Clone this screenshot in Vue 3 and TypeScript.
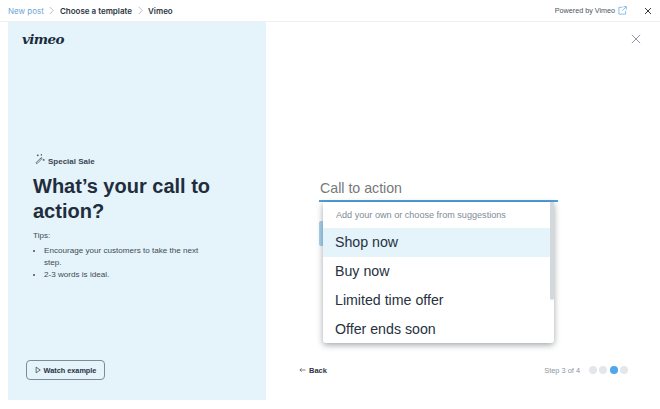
<template>
  <div class="page">
    <header class="topbar">
      <nav class="crumbs">
        <span class="crumb-link">New post</span>
        <svg class="chev" viewBox="0 0 8 10"><path d="M2 1l4 4-4 4" /></svg>
        <span>Choose a template</span>
        <svg class="chev" viewBox="0 0 8 10"><path d="M2 1l4 4-4 4" /></svg>
        <span>Vimeo</span>
      </nav>
      <div class="powered">
        <span>Powered by Vimeo</span>
        <svg class="ext" viewBox="0 0 10 10">
          <path d="M5 1.500H1v7.500h7.500V5.500M6 .7h3.300V4M9.200.8L4.700 5.300" />
        </svg>
        <svg class="top-close" viewBox="0 0 8 8"><path d="M1 1l6 6M7 1L1 7" /></svg>
      </div>
    </header>

    <main class="body">
      <aside class="panel">
        <div class="logo">vimeo</div>
        <div class="intro">
          <div class="tag">
            <svg class="wand" viewBox="0 0 12 12">
              <path d="M1 10.200l1 1 5.800-5.800-1-1zM6 5.200l1 1" />
              <path d="M3 1v2M2 2h2M9.500 6v2M8.500 7h2M7 .8v1.400M6.300 1.500h1.400" />
            </svg>
            <span>Special Sale</span>
          </div>
          <h1>What’s your call to action?</h1>
          <p class="tips-label">Tips:</p>
          <ul class="tips">
            <li v-for="tip in tips" :key="tip">{{ tip }}</li>
          </ul>
        </div>
        <button class="watch">
          <svg viewBox="0 0 8 10"><path d="M1.500 1.200v7.600L7 5z" /></svg>
          Watch example
        </button>
      </aside>

      <section class="content">
        <svg class="close" viewBox="0 0 12 12"><path d="M1 1l10 10M11 1L1 11" /></svg>
        <div class="form">
          <div class="field">
            <div class="field-input">Call to action</div>
            <div class="peek"></div>
            <div class="dropdown">
              <div class="hint">Add your own or choose from suggestions</div>
              <div
                v-for="(item, i) in suggestions"
                :key="item"
                class="option"
                :class="{ active: i === 0 }"
              >
                {{ item }}
              </div>
              <div class="scroll-thumb"></div>
            </div>
          </div>
        </div>
        <footer class="foot">
          <button class="back">
            <svg viewBox="0 0 8 6"><path d="M7.500 3H1M3 1L1 3l2 2" /></svg>
            Back
          </button>
          <div class="steps">
            <span class="step-label">Step 3 of 4</span>
            <span
              v-for="n in 4"
              :key="n"
              class="dot"
              :class="{ on: n === 3 }"
            ></span>
          </div>
        </footer>
      </section>
    </main>
  </div>
</template>

<script setup lang="ts">
const tips: string[] = [
  'Encourage your customers to take the next step.',
  '2-3 words is ideal.',
]

const suggestions: string[] = [
  'Shop now',
  'Buy now',
  'Limited time offer',
  'Offer ends soon',
]
</script>

<style>
html,
body {
  margin: 0;
  background: #fff;
}
</style>

<style scoped>
.page {
  width: 660px;
  height: 409px;
  overflow: hidden;
  display: flex;
  flex-direction: column;
  font-family: "Liberation Sans", Arial, sans-serif;
  color: #1f2d3d;
}

.topbar {
  height: 21px;
  flex: none;
  display: flex;
  align-items: center;
  justify-content: space-between;
  padding: 0 8px;
  border-bottom: 1px solid #eef0f2;
  font-family: Inter, "Liberation Sans", sans-serif;
  font-size: 8px;
}

.crumbs {
  display: flex;
  align-items: center;
  gap: 4.500px;
  font-weight: 600;
  color: #2b3642;
}

.crumb-link {
  color: #6ba6dc;
  font-weight: 400;
}

.chev {
  width: 7px;
  height: 9px;
  fill: none;
  stroke: #a9afb5;
  stroke-width: 0.9;
}

.powered {
  display: flex;
  align-items: center;
  font-family: "Liberation Sans", Arial, sans-serif;
  font-size: 7.2px;
  color: #4a5560;
}

.ext {
  width: 9px;
  height: 9px;
  margin-left: 3px;
  fill: none;
  stroke: #6fb0e6;
  stroke-width: 0.9;
}

.top-close {
  width: 8px;
  height: 8px;
  margin-left: 17px;
  fill: none;
  stroke: #333c45;
  stroke-width: 1;
}

.body {
  flex: 1;
  display: flex;
  padding: 0 0 9px 8px;
  min-height: 0;
}

.panel {
  width: 258px;
  flex: none;
  box-sizing: border-box;
  background: #e5f3fa;
  display: flex;
  flex-direction: column;
  padding: 8px 18px 20px 14px;
}

.logo {
  font-family: "DejaVu Serif", "Liberation Serif", serif;
  font-style: italic;
  font-weight: 700;
  font-size: 13.500px;
  line-height: 18px;
  color: #1a2b3c;
  letter-spacing: -0.6px;
}

.intro {
  margin-top: 105px;
  padding-left: 11px;
  flex: 1;
}

.tag {
  display: flex;
  align-items: flex-end;
  gap: 2px;
  margin-left: 2px;
  font-size: 8px;
  font-weight: 700;
  color: #3a4753;
  height: 13px;
}

.wand {
  width: 11px;
  height: 12px;
  margin-bottom: 1px;
  fill: none;
  stroke: #3a4753;
  stroke-width: 0.8;
}

h1 {
  margin: 8px 0 0;
  width: 190px;
  font-size: 20px;
  line-height: 25px;
  font-weight: 700;
  color: #1f2d3d;
}

.tips-label {
  margin: 6px 0 0;
  font-size: 8.1px;
  line-height: 12px;
  color: #3f4b57;
}

.tips {
  margin: 3px 0 0;
  padding: 0 0 0 11px;
  width: 170px;
  font-size: 8.1px;
  line-height: 12px;
  color: #3f4b57;
}

.watch {
  align-self: flex-start;
  margin-left: 4px;
  width: 79px;
  height: 20px;
  box-sizing: border-box;
  display: flex;
  align-items: center;
  justify-content: center;
  gap: 3px;
  padding: 0;
  background: transparent;
  border: 1px solid #7d8b98;
  border-radius: 4px;
  font-family: inherit;
  font-size: 7.3px;
  font-weight: 700;
  color: #26323e;
}

.watch svg {
  width: 6px;
  height: 8px;
  fill: none;
  stroke: #26323e;
  stroke-width: 0.9;
}

.content {
  flex: 1;
  position: relative;
  display: flex;
  flex-direction: column;
  min-width: 0;
}

.close {
  position: absolute;
  top: 12px;
  right: 19px;
  width: 10px;
  height: 10px;
  fill: none;
  stroke: #7b8692;
  stroke-width: 1;
}

.form {
  flex: 1;
  padding: 157px 0 0 53px;
}

.field {
  position: relative;
  width: 239px;
}

.field-input {
  height: 23px;
  box-sizing: border-box;
  padding-left: 1px;
  border-bottom: 2px solid #4da0dc;
  font-size: 14.2px;
  line-height: 18px;
  color: #76797c;
}

.peek {
  position: absolute;
  top: 42px;
  left: 0;
  width: 5px;
  height: 25px;
  background: #a9d3ee;
  border-radius: 2px 0 0 2px;
}

.dropdown {
  position: absolute;
  top: 23px;
  left: 4px;
  width: 231px;
  height: 141px;
  overflow: hidden;
  background: #fff;
  border-radius: 0 0 3px 3px;
  box-shadow: 0 2px 6px rgba(30, 40, 50, 0.42);
}

.hint {
  height: 26px;
  padding: 6px 0 0 13px;
  box-sizing: border-box;
  font-size: 9.1px;
  line-height: 14px;
  color: #7f8b96;
}

.option {
  height: 29px;
  padding-left: 12px;
  font-size: 14.2px;
  line-height: 29px;
  color: #26323e;
}

.option.active {
  background: #e5f3fa;
}

.scroll-thumb {
  position: absolute;
  top: 0;
  right: 0;
  width: 4px;
  height: 98px;
  background: #d3d8dc;
  border-radius: 0 0 2px 2px;
}

.foot {
  flex: none;
  height: 30px;
  margin-bottom: 15px;
  display: flex;
  align-items: center;
  justify-content: space-between;
  padding: 0 32px 0 33px;
}

.back {
  display: flex;
  align-items: center;
  gap: 3px;
  padding: 0;
  background: none;
  border: none;
  font-family: inherit;
  font-size: 7.5px;
  font-weight: 700;
  color: #2b3642;
}

.back svg {
  width: 7px;
  height: 6px;
  fill: none;
  stroke: #2b3642;
  stroke-width: 0.7;
}

.steps {
  display: flex;
  align-items: center;
  gap: 2.5px;
}

.step-label {
  margin-right: 6px;
  font-size: 7.4px;
  color: #8b96a1;
}

.dot {
  width: 8px;
  height: 8px;
  border-radius: 50%;
  background: #e3e7ea;
}

.dot.on {
  background: #4da6ee;
}
</style>
